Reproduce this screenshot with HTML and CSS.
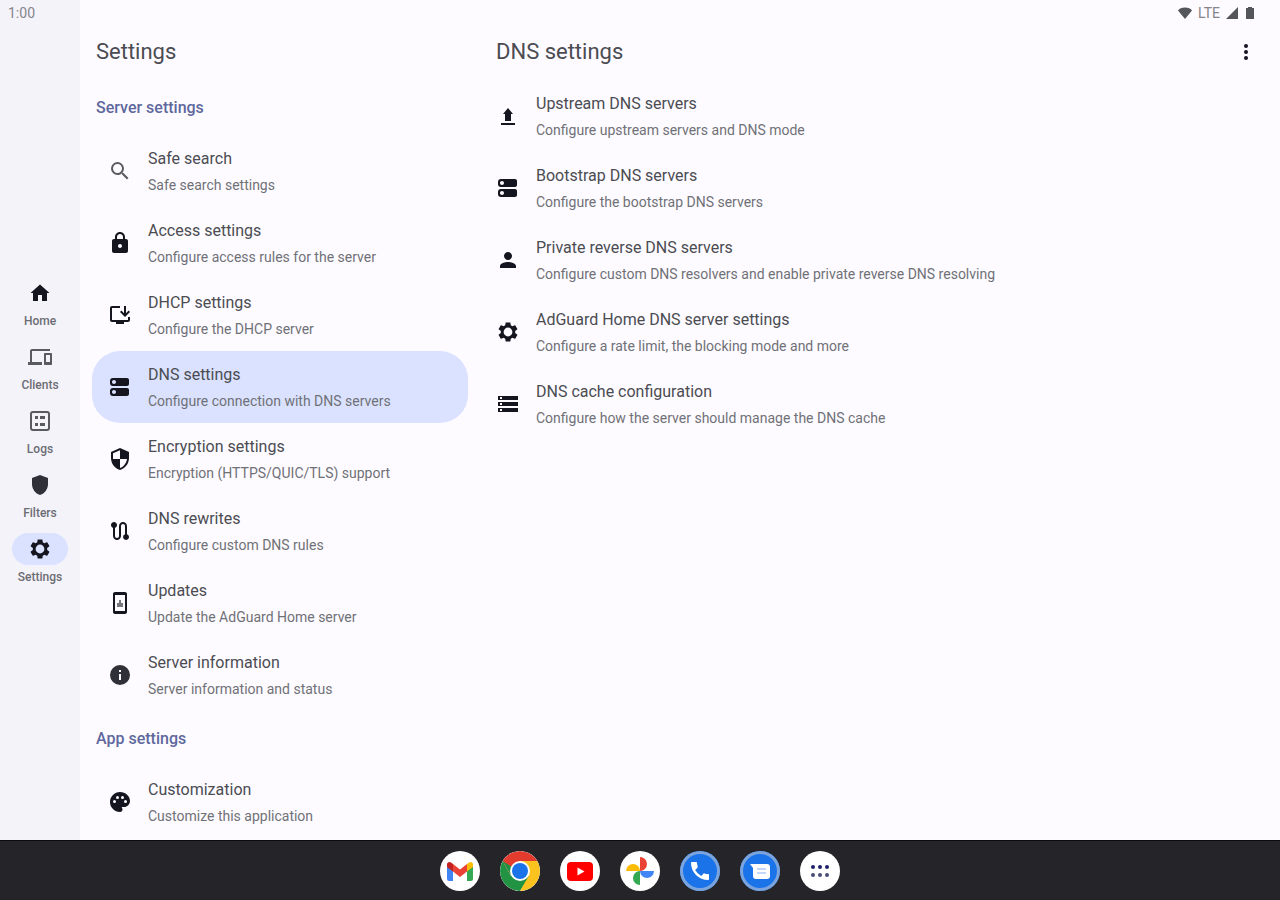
FILE: index.html
```html
<!DOCTYPE html>
<html lang="en">
<head>
    <meta charset="UTF-8">
    <meta name="viewport" content="width=device-width, initial-scale=1.0">
    <title>DNS settings</title>
    <link rel="stylesheet" href="styles.css">
</head>
<body>
    <svg class="sprite" aria-hidden="true">
        <symbol id="icon-gear" viewBox="0 0 24 24"><path d="M19.14 12.94c.04-.3.06-.61.06-.94 0-.32-.02-.64-.07-.94l2.03-1.58c.18-.14.23-.41.12-.61l-1.92-3.32c-.12-.22-.37-.29-.59-.22l-2.39.96c-.5-.38-1.03-.7-1.62-.94l-.36-2.54c-.04-.24-.24-.41-.48-.41h-3.84c-.24 0-.43.17-.47.41l-.36 2.54c-.59.24-1.13.57-1.62.94l-2.39-.96c-.22-.08-.47 0-.59.22L2.74 8.87c-.12.21-.08.47.12.61l2.03 1.58c-.05.3-.09.63-.09.94s.02.64.07.94l-2.03 1.58c-.18.14-.23.41-.12.61l1.92 3.32c.12.22.37.29.59.22l2.39-.96c.5.38 1.03.7 1.62.94l.36 2.54c.05.24.24.41.48.41h3.84c.24 0 .44-.17.47-.41l.36-2.54c.59-.24 1.13-.56 1.62-.94l2.39.96c.22.08.47 0 .59-.22l1.92-3.32c.12-.22.07-.47-.12-.61l-2.01-1.58zM12 16.4a4.4 4.4 0 0 1 0-8.8 4.4 4.4 0 0 1 0 8.8z" fill-rule="evenodd"/></symbol>
        <symbol id="icon-dns" viewBox="0 0 24 24"><path d="M19 13H5a3 3 0 0 0-3 3v2a3 3 0 0 0 3 3h14c1.1 0 2-.9 2-2v-4c0-1.1-.9-2-2-2zM6 19c-1.1 0-2-.9-2-2s.9-2 2-2 2 .9 2 2-.9 2-2 2zM19 3H5a3 3 0 0 0-3 3v2a3 3 0 0 0 3 3h14c1.1 0 2-.9 2-2V5c0-1.1-.9-2-2-2zM6 9c-1.1 0-2-.9-2-2s.9-2 2-2 2 .9 2 2-.9 2-2 2z"/></symbol>
    </svg>

    <div class="status-bar">
        <span>1:00</span>
        <div class="status-bar__icons">
            <svg width="16" height="14" viewBox="0 0 16 14"><path d="M8 13L1 4.500C3 .5 13 .5 15 4.500z"/></svg>
            <span>LTE</span>
            <svg width="14" height="14" viewBox="0 0 14 14"><path d="M13 1v12H1z"/></svg>
            <svg width="12" height="14" viewBox="0 0 12 14"><path d="M4 1h4v1h2v11H2V2h2z"/></svg>
        </div>
    </div>

    <div class="app">
        <nav class="rail">
            <a class="rail__item" href="#home">
                <span class="rail__icon"><svg class="icon" viewBox="0 0 24 24"><path d="M10 20v-6h4v6h5v-8h2.500L12 3.500 2.500 12H5v8z"/></svg></span>
                Home
            </a>
            <a class="rail__item" href="#clients">
                <span class="rail__icon"><svg class="icon icon--muted" viewBox="0 0 24 24"><path d="M4 6h18V4H4c-1.100 0-2 .9-2 2v11H0v3h14v-3H4V6zm19 2h-6c-.55 0-1 .45-1 1v10c0 .55.45 1 1 1h6c.55 0 1-.45 1-1V9c0-.55-.45-1-1-1zm-1 9h-4v-7h4v7z"/></svg></span>
                Clients
            </a>
            <a class="rail__item" href="#logs">
                <span class="rail__icon"><svg class="icon icon--muted" viewBox="0 0 24 24"><path fill-rule="evenodd" d="M5 2h14a3 3 0 0 1 3 3v14a3 3 0 0 1-3 3H5a3 3 0 0 1-3-3V5a3 3 0 0 1 3-3zm0 2a1 1 0 0 0-1 1v14a1 1 0 0 0 1 1h14a1 1 0 0 0 1-1V5a1 1 0 0 0-1-1zM7 7h3v3H7zm5 0h5v3h-5zM7 14h3v3H7zm5 0h5v3h-5z"/></svg></span>
                Logs
            </a>
            <a class="rail__item" href="#filters">
                <span class="rail__icon"><svg class="icon icon--soft" viewBox="0 0 24 24"><path d="M12 2L4 5v6.090c0 5.050 3.410 9.760 8 10.910 4.590-1.150 8-5.860 8-10.910V5z"/></svg></span>
                Filters
            </a>
            <a class="rail__item rail__item--active" href="#settings" aria-current="page">
                <span class="rail__icon"><svg class="icon"><use href="#icon-gear"/></svg></span>
                Settings
            </a>
        </nav>

        <section class="pane pane--menu">
            <header class="app-bar"><h1>Settings</h1></header>

            <h2 class="section-title">Server settings</h2>
            <ul class="list">
                <li><a class="item" href="#safe-search">
                    <svg class="icon icon--muted" viewBox="0 0 24 24"><path d="M15.500 14h-.79l-.28-.27A6.471 6.471 0 0 0 16 9.500 6.500 6.500 0 1 0 9.500 16c1.610 0 3.090-.59 4.230-1.570l.27.28v.79l5 4.990L20.490 19l-4.990-5zm-6 0C7.010 14 5 11.990 5 9.500S7.010 5 9.500 5 14 7.010 14 9.500 11.990 14 9.500 14z"/></svg>
                    <span class="item__text"><span class="item__title">Safe search</span><span class="item__info">Safe search settings</span></span>
                </a></li>
                <li><a class="item" href="#access">
                    <svg class="icon" viewBox="0 0 24 24"><path d="M18 8h-1V6c0-2.760-2.240-5-5-5S7 3.240 7 6v2H6c-1.100 0-2 .9-2 2v10c0 1.100.9 2 2 2h12c1.100 0 2-.9 2-2V10c0-1.100-.9-2-2-2zm-6 9c-1.100 0-2-.9-2-2s.9-2 2-2 2 .9 2 2-.9 2-2 2zm3-9H9V6c0-1.660 1.340-3 3-3s3 1.340 3 3v2z"/></svg>
                    <span class="item__text"><span class="item__title">Access settings</span><span class="item__info">Configure access rules for the server</span></span>
                </a></li>
                <li><a class="item" href="#dhcp">
                    <svg class="icon" viewBox="0 0 24 24"><path d="M20 17H4V5h8V3H4c-1.100 0-2 .9-2 2v12c0 1.100.9 2 2 2h4v2h8v-2h4c1.100 0 2-.9 2-2v-3h-2zM17 14l5-5-1.410-1.410L18 10.170V3h-2v7.170l-2.590-2.580L12 9z"/></svg>
                    <span class="item__text"><span class="item__title">DHCP settings</span><span class="item__info">Configure the DHCP server</span></span>
                </a></li>
                <li><a class="item item--active" href="#dns" aria-current="true">
                    <svg class="icon"><use href="#icon-dns"/></svg>
                    <span class="item__text"><span class="item__title">DNS settings</span><span class="item__info">Configure connection with DNS servers</span></span>
                </a></li>
                <li><a class="item" href="#encryption">
                    <svg class="icon" viewBox="0 0 24 24"><path d="M12 1L3 5v6c0 5.550 3.840 10.740 9 12 5.160-1.260 9-6.450 9-12V5l-9-4zm0 10.990h7c-.53 4.120-3.280 7.790-7 8.940V12H5V6.300l7-3.110v8.800z"/></svg>
                    <span class="item__text"><span class="item__title">Encryption settings</span><span class="item__info">Encryption (HTTPS/QUIC/TLS) support</span></span>
                </a></li>
                <li><a class="item" href="#rewrites">
                    <svg class="icon" viewBox="0 0 24 24"><path d="M19 15.180V7c0-2.210-1.790-4-4-4s-4 1.790-4 4v10c0 1.100-.9 2-2 2s-2-.9-2-2V8.820C8.160 8.400 9 7.300 9 6c0-1.660-1.340-3-3-3S3 4.340 3 6c0 1.300.84 2.400 2 2.820V17c0 2.210 1.790 4 4 4s4-1.790 4-4V7c0-1.100.9-2 2-2s2 .9 2 2v8.180A2.996 2.996 0 0 0 18 21c1.660 0 3-1.340 3-3 0-1.300-.84-2.400-2-2.820z"/></svg>
                    <span class="item__text"><span class="item__title">DNS rewrites</span><span class="item__info">Configure custom DNS rules</span></span>
                </a></li>
                <li><a class="item" href="#updates">
                    <svg class="icon" viewBox="0 0 24 24"><path d="M17 1H7c-1.100 0-2 .9-2 2v18c0 1.100.9 2 2 2h10c1.100 0 2-.9 2-2V3c0-1.100-.9-2-2-2zm0 19H7V4h10v16z"/><path class="icon__detail" d="M11 9h2v3h2v4H9v-4h2z"/></svg>
                    <span class="item__text"><span class="item__title">Updates</span><span class="item__info">Update the AdGuard Home server</span></span>
                </a></li>
                <li><a class="item" href="#server-info">
                    <svg class="icon icon--soft" viewBox="0 0 24 24"><path d="M12 2a10 10 0 1 0 0 20 10 10 0 0 0 0-20zm1 15h-2v-6h2v6zm0-8h-2V7h2v2z"/></svg>
                    <span class="item__text"><span class="item__title">Server information</span><span class="item__info">Server information and status</span></span>
                </a></li>
            </ul>

            <h2 class="section-title">App settings</h2>
            <ul class="list">
                <li><a class="item" href="#customization">
                    <svg class="icon" viewBox="0 0 24 24"><path d="M12 2C6.490 2 2 6.490 2 12s4.490 10 10 10c1.380 0 2.500-1.120 2.500-2.500 0-.61-.23-1.200-.64-1.670-.08-.1-.13-.21-.13-.33 0-.28.22-.5.5-.5H16c3.310 0 6-2.690 6-6 0-4.960-4.490-9-10-9zm5.500 11a1.500 1.500 0 1 1 0-3 1.500 1.500 0 0 1 0 3zm-3-4a1.500 1.500 0 1 1 0-3 1.500 1.500 0 0 1 0 3zM5 11.500a1.500 1.500 0 1 1 3 0 1.500 1.500 0 0 1-3 0zm6-4a1.500 1.500 0 1 1-3 0 1.500 1.500 0 0 1 3 0z"/></svg>
                    <span class="item__text"><span class="item__title">Customization</span><span class="item__info">Customize this application</span></span>
                </a></li>
            </ul>
        </section>

        <main class="pane pane--detail">
            <header class="app-bar">
                <h1>DNS settings</h1>
                <button class="more" type="button" aria-label="More options">
                    <svg class="icon" viewBox="0 0 24 24"><circle cx="12" cy="6" r="2"/><circle cx="12" cy="12" r="2"/><circle cx="12" cy="18" r="2"/></svg>
                </button>
            </header>

            <ul class="list">
                <li><a class="item" href="#upstream">
                    <svg class="icon" viewBox="0 0 24 24"><path d="M5 21h14v-2H5zM12 4l-5 6h2v7h6v-7h2z"/></svg>
                    <span class="item__text"><span class="item__title">Upstream DNS servers</span><span class="item__info">Configure upstream servers and DNS mode</span></span>
                </a></li>
                <li><a class="item" href="#bootstrap">
                    <svg class="icon"><use href="#icon-dns"/></svg>
                    <span class="item__text"><span class="item__title">Bootstrap DNS servers</span><span class="item__info">Configure the bootstrap DNS servers</span></span>
                </a></li>
                <li><a class="item" href="#private">
                    <svg class="icon" viewBox="0 0 24 24"><path d="M12 12c2.210 0 4-1.790 4-4s-1.790-4-4-4-4 1.790-4 4 1.790 4 4 4zm0 2c-2.670 0-8 1.340-8 4v2h16v-2c0-2.660-5.330-4-8-4z"/></svg>
                    <span class="item__text"><span class="item__title">Private reverse DNS servers</span><span class="item__info">Configure custom DNS resolvers and enable private reverse DNS resolving</span></span>
                </a></li>
                <li><a class="item" href="#dns-server">
                    <svg class="icon"><use href="#icon-gear"/></svg>
                    <span class="item__text"><span class="item__title">AdGuard Home DNS server settings</span><span class="item__info">Configure a rate limit, the blocking mode and more</span></span>
                </a></li>
                <li><a class="item" href="#cache">
                    <svg class="icon" viewBox="0 0 24 24"><path d="M2 20h20v-4H2v4zm2-3h2v2H4v-2zM2 4v4h20V4H2zm4 3H4V5h2v2zm-4 7h20v-4H2v4zm2-3h2v2H4v-2z"/></svg>
                    <span class="item__text"><span class="item__title">DNS cache configuration</span><span class="item__info">Configure how the server should manage the DNS cache</span></span>
                </a></li>
            </ul>
        </main>
    </div>

    <footer class="dock">
        <button class="dock__app" type="button" aria-label="Gmail">
            <svg viewBox="0 0 40 40">
                <path fill="#4285f4" d="M7 15l6 4v11H9a2 2 0 0 1-2-2z"/>
                <path fill="#34a853" d="M33 15l-6 4v11h4a2 2 0 0 0 2-2z"/>
                <path fill="#fbbc04" d="M27 13l2-1.500c2-1.300 4 0 4 2V16l-6 4.500z"/>
                <path fill="#c5221f" d="M13 13l-2-1.500c-2-1.300-4 0-4 2V16l6 4.500z"/>
                <path fill="#ea4335" d="M13 13l7 5.500 7-5.500v7.500L20 26l-7-5.500z"/>
            </svg>
        </button>
        <button class="dock__app" type="button" aria-label="Chrome">
            <svg viewBox="0 0 40 40">
                <path fill="#229342" d="M2.700 10A20 20 0 0 0 20 40l10-15H11z"/>
                <path fill="#fcc31e" d="M20 10h17.300A20 20 0 0 1 20 40l8.700-15z"/>
                <path fill="#e33b2e" d="M2.700 10a20 20 0 0 1 34.600 0H20l-8.700 15z"/>
                <path fill="#229342" d="M2.700 10l8.600 15 4-7z"/>
                <circle cx="20" cy="20" r="10" fill="#fff"/>
                <circle cx="20" cy="20" r="8" fill="#1a73e8"/>
            </svg>
        </button>
        <button class="dock__app" type="button" aria-label="YouTube">
            <svg viewBox="0 0 40 40">
                <rect x="7" y="11" width="26" height="19" rx="4" fill="#f00"/>
                <path fill="#fff" d="M17.500 16.500v8l7-4z"/>
            </svg>
        </button>
        <button class="dock__app" type="button" aria-label="Photos">
            <svg viewBox="0 0 40 40">
                <path fill="#ea4335" d="M20 6a7 7 0 0 1 0 14z"/>
                <path fill="#4285f4" d="M34 20a7 7 0 0 1-14 0z"/>
                <path fill="#34a853" d="M20 34a7 7 0 0 1 0-14z"/>
                <path fill="#fbbc04" d="M6 20a7 7 0 0 1 14 0z"/>
            </svg>
        </button>
        <button class="dock__app dock__app--blue" type="button" aria-label="Phone">
            <svg viewBox="0 0 40 40"><path fill="#fff" d="M12 11h4c.6 0 1 .4 1 1 .1 1.300.3 2.500.7 3.600.1.4 0 .8-.3 1.100l-2.200 2.200a16 16 0 0 0 6 6l2.200-2.200c.3-.3.700-.4 1.100-.3 1.100.4 2.300.6 3.500.6.6 0 1 .4 1 1v4c0 .6-.4 1-1 1A17 17 0 0 1 11 12c0-.6.4-1 1-1z"/></svg>
        </button>
        <button class="dock__app dock__app--blue" type="button" aria-label="Messages">
            <svg viewBox="0 0 40 40">
                <path fill="#fff" d="M10 13h17a3 3 0 0 1 3 3v9a3 3 0 0 1-3 3H16a3 3 0 0 1-3-3v-8z"/>
                <path fill="#c3d7fb" d="M17 17h9v2h-9zm0 4h9v2h-9z"/>
            </svg>
        </button>
        <button class="dock__app" type="button" aria-label="All apps">
            <svg viewBox="0 0 40 40">
                <g fill="#1f2266"><circle cx="13" cy="16" r="2"/><circle cx="20" cy="16" r="2"/><circle cx="27" cy="16" r="2"/></g>
                <g fill="#4b4d78"><circle cx="13" cy="24" r="2"/><circle cx="20" cy="24" r="2"/><circle cx="27" cy="24" r="2"/></g>
            </svg>
        </button>
    </footer>
</body>
</html>
```
FILE: styles.css
```css
* {
    box-sizing: border-box;
}

body {
    margin: 0;
    display: flex;
    flex-direction: column;
    height: 100vh;
    background: #fdfbff;
    color: #4b4c52;
    font-family: Roboto, sans-serif;
}

a {
    color: inherit;
    text-decoration: none;
}

h1,
h2 {
    margin: 0;
    font-weight: 400;
}

button {
    padding: 0;
    border: 0;
    cursor: pointer;
}

.sprite {
    position: absolute;
    width: 0;
    height: 0;
}

.icon {
    flex: none;
    width: 24px;
    height: 24px;
    fill: #14151f;
}

.icon--soft {
    fill: #303138;
}

.icon--muted {
    fill: #5a5b61;
}

.icon__detail {
    fill: #77787e;
}

/* Status bar, drawn over the rail and both panes */
.status-bar {
    position: absolute;
    top: 0;
    left: 0;
    right: 0;
    display: flex;
    align-items: center;
    justify-content: space-between;
    height: 24px;
    padding: 2px 24px 0 8px;
    font-size: 14px;
    color: #85858a;
}

.status-bar__icons {
    display: flex;
    align-items: center;
    gap: 5px;
    fill: #55565b;
}

.app {
    display: flex;
    flex: 1;
    min-height: 0;
}

/* Navigation rail */
.rail {
    display: flex;
    flex: none;
    flex-direction: column;
    align-items: center;
    justify-content: center;
    gap: 12px;
    width: 80px;
    padding-top: 22px;
    background: #f4f3fa;
}

.rail__item {
    display: flex;
    flex-direction: column;
    align-items: center;
    gap: 4px;
    font-size: 12px;
    font-weight: 500;
    line-height: 16px;
    color: #6c6d73;
}

.rail__icon {
    display: flex;
    align-items: center;
    justify-content: center;
    width: 56px;
    height: 32px;
    border-radius: 16px;
}

.rail__item--active .rail__icon {
    background: #dae2ff;
}

/* Panes */
.pane {
    padding-top: 24px;
    overflow: hidden;
}

.pane--menu {
    flex: none;
    width: 400px;
}

.pane--detail {
    flex: 1;
}

.app-bar {
    display: flex;
    align-items: center;
    justify-content: space-between;
    height: 56px;
    padding: 0 16px;
}

.app-bar h1 {
    font-size: 22px;
    line-height: 28px;
}

.more {
    display: flex;
    padding: 6px;
    background: none;
}

.section-title {
    padding: 16px 16px 15px;
    font-size: 16px;
    font-weight: 500;
    line-height: 24px;
    color: #5f689c;
}

.list {
    margin: 0;
    padding: 0;
    list-style: none;
}

.item {
    display: flex;
    align-items: center;
    gap: 16px;
    padding: 12px 16px;
}

.pane--menu .item {
    margin: 0 12px;
    border-radius: 28px;
}

.item--active {
    background: #dae2ff;
}

.item__text {
    display: flex;
    flex-direction: column;
    gap: 4px;
}

.item__title {
    font-size: 16px;
    line-height: 24px;
}

.item__info {
    font-size: 14px;
    line-height: 20px;
    color: #707177;
}

/* Dock */
.dock {
    display: flex;
    flex: none;
    align-items: center;
    justify-content: center;
    gap: 20px;
    height: 60px;
    background: #252529;
    border-top: 1px solid #0c0c0e;
}

.dock__app {
    width: 40px;
    height: 40px;
    border-radius: 50%;
    background: #fff;
    overflow: hidden;
}

.dock__app svg {
    display: block;
    width: 40px;
    height: 40px;
}

.dock__app--blue {
    background: #1a73e8;
    box-shadow: inset 0 0 0 3px #7ba4dc;
}
```
